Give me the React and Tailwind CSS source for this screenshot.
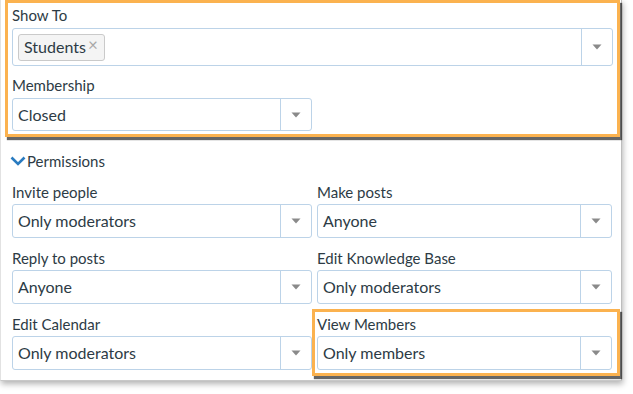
import React from "react";

// Arrow cell shared by every select box
function Caret() {
  return (
    <div className="flex w-[31px] self-stretch items-center justify-center border-l border-[#bcd3e8]">
      <svg width="10" height="6" viewBox="0 0 10 6">
        <path d="M0.5 0.5 L9.5 0.5 L5 5.5 Z" fill="#8a8a8a" />
      </svg>
    </div>
  );
}

function Select({ value, h = "h-[34px]" }) {
  return (
    <div className={`flex ${h} items-center rounded-[3px] border border-[#bcd3e8] bg-white`}>
      <span className="flex-1 pl-[5px] text-[16px] leading-[20px] text-[#2d3b45]">{value}</span>
      <Caret />
    </div>
  );
}

function Field({ label, value }) {
  return (
    <div>
      <div className="mb-[3px] text-[15px] leading-[18px] text-[#2d3b45]">{label}</div>
      <Select value={value} />
    </div>
  );
}

const permissions = [
  { label: "Invite people", value: "Only moderators" },
  { label: "Make posts", value: "Anyone" },
  { label: "Reply to posts", value: "Anyone" },
  { label: "Edit Knowledge Base", value: "Only moderators" },
  { label: "Edit Calendar", value: "Only moderators" },
  { label: "View Members", value: "Only members", highlight: true },
];

export default function App() {
  return (
    <div className="h-[394px] w-[633px] overflow-hidden bg-white" style={{ fontFamily: "Lato, 'Open Sans', sans-serif" }}>
      <div className="h-[381px] w-[622px] border-x border-b border-l-[#e2e2e2] border-r-[#bdbdbd] border-b-[#c8c8c8] bg-white shadow-[1px_3px_6px_rgba(0,0,0,0.3)]">
        {/* highlighted block: Show To + Membership */}
        <div className="ml-[4px] h-[137px] w-[615px] border-[3px] border-[#fbb24f] px-[4px] pt-[3px] pb-[3px] shadow-[2px_3px_1px_rgba(0,0,0,0.6)]">
          <div className="mb-[4px] text-[15px] leading-[18px] text-[#2d3b45]">Show To</div>
          <div className="flex h-[38px] rounded-[3px] border border-[#bcd3e8]">
            <div className="flex flex-1 items-center pl-[5px]">
              <span className="flex h-[27px] items-center rounded-[3px] border border-[#cacaca] bg-[#f4f4f4] pl-[5px] pr-[6px] text-[16px] text-[#2d3b45]">
                Students
                <span className="ml-[2px] -mt-[4px] text-[17px] text-[#a8a8a8]">×</span>
              </span>
            </div>
            <Caret />
          </div>
          <div className="mt-[10px] mb-[4px] text-[15px] leading-[18px] text-[#2d3b45]">Membership</div>
          <div className="w-[300px]">
            <Select value="Closed" h="h-[33px]" />
          </div>
        </div>

        {/* Permissions header */}
        <div className="mt-[15px] flex items-center pl-[9px] text-[15px] leading-[18px] text-[#2d3b45]">
          <svg width="16" height="10" viewBox="0 0 16 10" className="mr-[1px]">
            <path d="M1.5 1.5 L8 8 L14.5 1.5" fill="none" stroke="#2a7bc0" strokeWidth="2.6" />
          </svg>
          Permissions
        </div>

        <div className="mt-[13px] ml-[11px] grid grid-cols-[300px_295px] gap-x-[5px] gap-y-[11px]">
          {permissions.map((p) => (
            <div key={p.label} className="relative">
              {p.highlight && (
                <div className="pointer-events-none absolute -top-[6px] -bottom-[6px] -left-[5px] -right-[8px] border-[3px] border-[#fbb24f] shadow-[2px_3px_1px_rgba(0,0,0,0.6)]" />
              )}
              <Field label={p.label} value={p.value} />
            </div>
          ))}
        </div>
      </div>
    </div>
  );
}
